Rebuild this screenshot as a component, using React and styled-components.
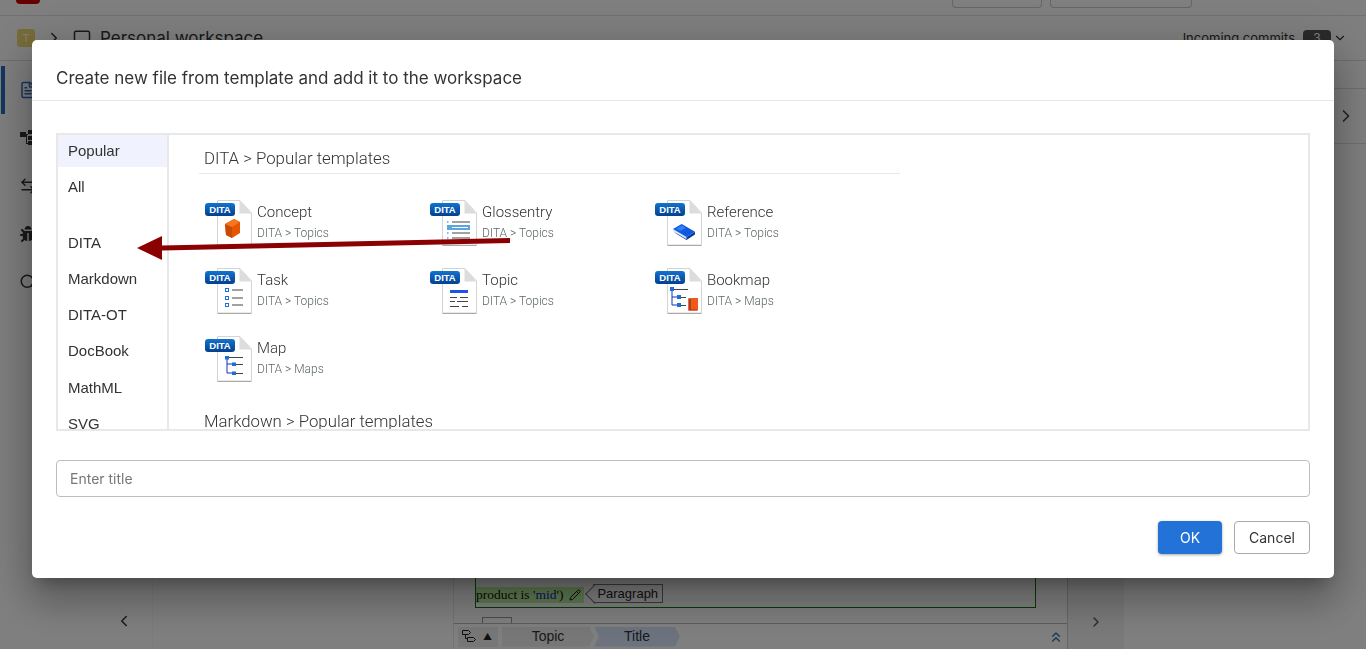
import styled, { createGlobalStyle } from "styled-components";
import { FileText, ArrowLeftRight, Search, ChevronRight, ChevronLeft, ChevronDown, ChevronsUp, Monitor, Pencil } from "lucide-react";
import { FaBug } from "react-icons/fa";

const GlobalStyle = createGlobalStyle`
  html, body { margin: 0; height: 100%; overflow: hidden; }
  body { font-family: Inter, "Liberation Sans", sans-serif; color: #333; background: #fff; }
  * { box-sizing: border-box; }
`;

/* ---------- page behind the dialog ---------- */
const Page = styled.div`
  height: 649px;
  display: flex;
  flex-direction: column;
  overflow: hidden;
`;
const TopBar = styled.div`
  height: 16px;
  flex: none;
  border-bottom: 1px solid #e2e2e2;
  display: flex;
  padding-left: 16px;
  overflow: hidden;
`;
const Logo = styled.div`
  width: 24px;
  height: 4px;
  background: #c00;
  border-radius: 0 0 4px 4px;
`;
const TopButtons = styled.div`
  margin-left: auto;
  margin-right: 174px;
  display: flex;
  gap: 8px;
`;
const TopButton = styled.div`
  width: ${(p) => p.$w}px;
  height: 8px;
  border: 1px solid #ccc;
  border-top: 0;
  border-radius: 0 0 4px 4px;
`;
const WorkspaceBar = styled.div`
  height: 45px;
  flex: none;
  border-bottom: 1px solid #ddd;
  display: flex;
  align-items: center;
  padding: 0 19px 0 17px;
  gap: 10px;
  font-size: 17px;
  svg { flex: none; }
  > span { margin-left: -1px; }
`;
const Avatar = styled.div`
  width: 18px;
  height: 18px;
  border-radius: 3px;
  background: #f0d870;
  color: #fff;
  font-size: 11px;
  display: flex;
  align-items: center;
  justify-content: center;
`;
const Commits = styled.div`
  margin-left: auto;
  display: flex;
  align-items: center;
  gap: 8px;
  font-size: 13px;
  svg { margin-left: -6px; }
`;
const CountBadge = styled.span`
  width: 28px;
  height: 16px;
  border-radius: 4px;
  background: #555;
  color: #fff;
  font-size: 12px;
  text-align: center;
`;
const Body = styled.div`
  flex: 1;
  display: flex;
  min-height: 0;
`;
const Rail = styled.div`
  width: 56px;
  padding-top: 5px;
  flex: none;
`;
const RailItem = styled.div`
  height: 48px;
  display: flex;
  align-items: center;
  justify-content: center;
  padding-right: 6px;
  color: ${(p) => (p.$active ? "#2a6cc4" : "#333")};
  border-left: 4px solid ${(p) => (p.$active ? "#2a6cc4" : "transparent")};
  margin-left: 1px;
`;
const LeftPanel = styled.div`
  width: 97px;
  flex: none;
  display: flex;
  align-items: flex-end;
  justify-content: flex-end;
  padding: 0 19px 19px 0;
  border-right: 1px solid #f7f7f7;
  color: #333;
`;
const Gutter = styled.div`
  width: 300px;
  flex: none;
`;
const Editor = styled.div`
  width: 615px;
  flex: none;
  display: flex;
  flex-direction: column;
  justify-content: flex-end;
  border-left: 1px solid #e8e8e8;
  border-right: 1px solid #ccc;
`;
const EditBox = styled.div`
  margin: 0 31px 0 21px;
  height: 33px;
  border: 1px solid #0a7a0a;
  border-top: 0;
  display: flex;
  align-items: flex-start;
  padding-top: 12px;
`;
const Marked = styled.span`
  font: 13.5px "Liberation Serif", serif;
  background: #bcf5a0;
  height: 16px;
  line-height: 16px;
  display: flex;
  align-items: center;
  gap: 6px;
  padding-right: 3px;
  color: #111;
  b { font-weight: 400; color: #22c; }
`;
const Tag = styled.span`
  position: relative;
  margin: -3px 0 0 9px;
  height: 19px;
  padding: 0 4px 0 4px;
  border: 1px solid #777;
  border-left: 0;
  font: 13px "Liberation Sans", sans-serif;
  line-height: 18px;
  color: #222;
  &::before {
    content: "";
    position: absolute;
    left: -5px;
    top: 2px;
    width: 13px;
    height: 13px;
    border-left: 1px solid #777;
    border-bottom: 1px solid #777;
    transform: rotate(45deg);
  }
`;
const Stub = styled.div`
  margin: 9px 0 0 28px;
  width: 30px;
  height: 6px;
  border: 1px solid #999;
  border-bottom: 0;
`;
const Crumbs = styled.div`
  height: 26px;
  border-top: 1px solid #bbb;
  display: flex;
  align-items: center;
  padding: 0 3px 0 4px;
  background: #fff;
`;
const CrumbTools = styled.div`
  width: 40px;
  height: 20px;
  background: #eee;
  margin-right: 4px;
  display: flex;
  align-items: center;
  justify-content: space-between;
  padding: 0 6px 0 4px;
  font-size: 9px;
  color: #222;
`;
const Crumb = styled.div`
  width: ${(p) => p.$w}px;
  height: 20px;
  background: ${(p) => (p.$on ? "#d8e6ff" : "#eeeeee")};
  clip-path: polygon(0 0, calc(100% - 5px) 0, 100% 50%, calc(100% - 5px) 100%, 0 100%${(p) => (p.$on ? ", 5px 50%" : "")});
  font: 14px "Liberation Sans", sans-serif;
  color: #333;
  text-align: center;
  line-height: 19px;
`;
const CrumbEnd = styled.div`
  margin-left: auto;
  display: flex;
  color: #2a70b0;
`;
const SideColumn = styled.div`
  width: 56px;
  flex: none;
  background: #f4f4f4;
  display: flex;
  align-items: flex-end;
  justify-content: center;
  padding-bottom: 19px;
  color: #555;
`;
const RightPanel = styled.div`
  flex: 1;
  display: flex;
  flex-direction: column;
`;
const RightHead = styled.div`
  margin-top: 27px;
  height: 56px;
  border-top: 1px solid #ddd;
  border-bottom: 1px solid #ddd;
  display: flex;
  align-items: center;
  justify-content: flex-end;
  padding-right: 10px;
  color: #444;
`;

/* ---------- dialog ---------- */
const Backdrop = styled.div`
  position: fixed;
  inset: 0;
  background: rgba(0, 0, 0, 0.5);
`;
const Dialog = styled.div`
  position: fixed;
  left: 32px;
  top: 40px;
  width: 1302px;
  height: 538px;
  background: #fff;
  border-radius: 5px;
  box-shadow: 0 11px 15px -7px rgba(0, 0, 0, 0.25), 0 24px 38px 3px rgba(0, 0, 0, 0.18), 0 9px 46px 8px rgba(0, 0, 0, 0.16);
  display: flex;
  flex-direction: column;
`;
const DialogTitle = styled.div`
  height: 61px;
  flex: none;
  padding: 16px 24px 0;
  display: flex;
  align-items: center;
  border-bottom: 1px solid #e6e6e6;
  font-size: 17px;
  color: #333;
`;
const DialogBody = styled.div`
  flex: 1;
  padding: 32px 24px 24px;
  display: flex;
  flex-direction: column;
`;
const Chooser = styled.div`
  height: 298px;
  flex: none;
  border: 2px solid #e8e8e8;
  display: flex;
  overflow: hidden;
`;
const Categories = styled.div`
  width: 111px;
  flex: none;
  border-right: 2px solid #e8e8e8;
  overflow: hidden;
`;
const Category = styled.div`
  height: 36.2px;
  padding-left: 10px;
  display: flex;
  align-items: center;
  font: 15px "Liberation Sans", sans-serif;
  color: #333;
  ${(p) => p.$on && "height: 32px; margin-bottom: 1px; padding-bottom: 2px; background: #f0f3fd;"}
  ${(p) => p.$gap && "margin-bottom: 20px;"}
`;
const Templates = styled.div`
  flex: 1;
  padding-left: 30px;
  overflow: hidden;
`;
const GroupTitle = styled.div`
  width: 701px;
  height: 39px;
  padding: 7px 0 0 5px;
  display: flex;
  align-items: center;
  border-bottom: 1px solid #e8e8e8;
  font: 300 16.8px Roboto, sans-serif;
  color: #333;
`;
const Grid = styled.div`
  display: grid;
  grid-template-columns: repeat(3, 225px);
  grid-auto-rows: 46px;
  row-gap: 22px;
  padding: 26px 0 0 6px;
  margin-bottom: 16px;
`;
const Item = styled.div`
  display: flex;
  gap: 4px;
`;
const Thumb = styled.div`
  position: relative;
  width: 48px;
  height: 46px;
  flex: none;
`;
const DitaBadge = styled.span`
  position: absolute;
  left: 0;
  top: 3px;
  width: 30px;
  height: 13px;
  border-radius: 3px;
  background: linear-gradient(#1273d0, #04408f);
  color: #fff;
  font: 700 9.5px/13px "Liberation Sans", sans-serif;
  text-align: center;
`;
const ItemText = styled.div`
  padding-top: 3px;
  font-family: Roboto, sans-serif;
`;
const ItemName = styled.div`
  font-size: 15px;
  font-weight: 300;
  line-height: 18px;
  color: #333;
`;
const ItemPath = styled.div`
  margin-top: 5px;
  font-size: 12px;
  font-weight: 300;
  line-height: 15px;
  color: #5c6668;
`;
const TitleInput = styled.input`
  margin-top: 29px;
  height: 37px;
  flex: none;
  width: 100%;
  padding: 0 13px;
  border: 1px solid #bdbdbd;
  border-radius: 4px;
  outline: none;
  font: 14px Inter, sans-serif;
  &::placeholder { color: #777; opacity: 1; }
`;
const Actions = styled.div`
  margin-top: 24px;
  display: flex;
  justify-content: flex-end;
  gap: 12px;
`;
const Button = styled.button`
  height: 33px;
  width: ${(p) => (p.$primary ? 64 : 76)}px;
  border-radius: 4px;
  border: ${(p) => (p.$primary ? "0" : "1px solid #aaa")};
  background: ${(p) => (p.$primary ? "#2272d8" : "#fff")};
  color: ${(p) => (p.$primary ? "#fff" : "#333")};
  box-shadow: ${(p) => (p.$primary ? "0 1px 3px rgba(0,0,0,.35)" : "none")};
  font: 14px Inter, sans-serif;
`;
const Arrow = styled.svg`
  position: fixed;
  left: 130px;
  top: 230px;
  width: 390px;
  height: 32px;
  pointer-events: none;
`;

/* ---------- template icon drawings ---------- */
const line = "#444";
const blue = "#1b6fd8";
const trunk = "#1133bb";
const drawings = {
  concept: (
    <>
      <path d="M20 24 L29 19 L35 22 L35 33 L27 38 L21 35 Z" fill="#e85500" />
      <path d="M20 24 L27 27 L27 38 L21 35 Z" fill="#c84a08" />
      <path d="M20 24 L29 19 L35 22 L27 27 Z" fill="#f5761f" />
    </>
  ),
  task: (
    <>
      {[22, 30, 37].map((y) => (
        <g key={y}>
          <rect x="20.5" y={y - 1.5} width="3" height="3" fill="#fff" stroke={blue} />
          <path d={`M27 ${y}H38`} stroke={line} />
        </g>
      ))}
    </>
  ),
  glossentry: (
    <>
      <rect x="17" y="25" width="23" height="5" fill="#5aa6e0" />
      <path d="M22 27.5H38" stroke="#fff" />
      {[22, 33, 38].map((y) => (
        <g key={y}>
          <path d={`M17 ${y}h1.5`} stroke={blue} />
          <path d={`M22 ${y}H40`} stroke={line} />
        </g>
      ))}
    </>
  ),
  topic: (
    <>
      <rect x="20" y="22" width="18" height="3" fill="#1a55e8" />
      <path d="M20 29.5h7M30 29.5h8" stroke={line} />
      <path d="M20 33.5h5M27 33.5h11" stroke={line} />
      <path d="M20 38.5h9M32 38.5h6" stroke={line} />
    </>
  ),
  reference: (
    <>
      <path d="M18.5 32 L31.5 40 L40 34.5 V31.7 L31.5 37 Z" fill="#0a3a98" />
      <path d="M18 29 L31.5 37 L31.5 39.3 L18.5 31.6 Z" fill="#d4e8f8" />
      <path d="M18 29 L26.7 24 L40 31.7 L31.5 37 Z" fill="#0f58e0" />
      <path d="M21 28.5 L27 25.5 L31 28 L25 31 Z" fill="#2f80f5" />
    </>
  ),
  bookmap: (
    <>
      <path d="M17 21V37H23M17 29H23" fill="none" stroke={trunk} />
      <path d="M19 21.5H33M26 29.5H31M26 37.5H31" stroke={line} />
      <rect x="15" y="19" width="4" height="4" fill={blue} />
      <rect x="22" y="27" width="4" height="4" fill={blue} />
      <rect x="22" y="35" width="4" height="4" fill={blue} />
      <rect x="33" y="30" width="10" height="13" fill="#b83a10" stroke="#fff" strokeWidth=".6" />
      <rect x="36" y="30" width="7" height="11.5" fill="#f0581c" />
    </>
  ),
  map: (
    <>
      <path d="M22 21V37H28M22 28H28" fill="none" stroke={trunk} />
      <path d="M24 21.5H38M31 28.5H38M31 37.5H38" stroke={line} />
      <rect x="20" y="20" width="4" height="3.5" fill={blue} />
      <rect x="27" y="26.5" width="4" height="3.5" fill={blue} />
      <rect x="27" y="35.5" width="4" height="3.5" fill={blue} />
    </>
  ),
};

const templates = [
  { name: "Concept", kind: "concept", path: "DITA > Topics" },
  { name: "Glossentry", kind: "glossentry", path: "DITA > Topics" },
  { name: "Reference", kind: "reference", path: "DITA > Topics" },
  { name: "Task", kind: "task", path: "DITA > Topics" },
  { name: "Topic", kind: "topic", path: "DITA > Topics" },
  { name: "Bookmap", kind: "bookmap", path: "DITA > Maps" },
  { name: "Map", kind: "map", path: "DITA > Maps" },
];

const categories = ["Popular", "All", "DITA", "Markdown", "DITA-OT", "DocBook", "MathML", "SVG"];

const TemplateIcon = ({ kind }) => (
  <Thumb>
    <svg width="48" height="46" viewBox="0 0 48 46">
      <path d="M12.5 .5H35L46.5 13V45H12.5Z" fill="#fff" stroke="#d4d4d4" />
      <path d="M46.5 45.5H12.5" stroke="#a8a8a8" />
      <path d="M34.5 .5V13.5H46.5Z" fill="#dcdcdc" />
      {drawings[kind]}
    </svg>
    <DitaBadge>DITA</DitaBadge>
  </Thumb>
);

const TreeIcon = () => (
  <svg width="16" height="16" viewBox="0 0 16 16" fill="currentColor">
    <rect x="0" y="2" width="6" height="5" />
    <rect x="8" y="0" width="5" height="4" />
    <rect x="8" y="6" width="5" height="4" />
    <rect x="8" y="11" width="5" height="4" />
    <path d="M6 4h2v1H7v8h1v1H6z" />
  </svg>
);

const ElementIcon = () => (
  <svg width="16" height="16" viewBox="0 0 16 16" fill="none" stroke="#222">
    <path d="M.5 1.5h6l2 2-2 2h-6zM5.5 8.5h6l2 2-2 2h-6zM3.5 5.5v4h2" />
  </svg>
);

const Background = () => (
  <Page>
    <TopBar>
      <Logo />
      <TopButtons>
        <TopButton $w={90} />
        <TopButton $w={142} />
      </TopButtons>
    </TopBar>
    <WorkspaceBar>
      <Avatar>T</Avatar>
      <ChevronRight size={18} />
      <Monitor size={18} />
      <span>Personal workspace</span>
      <Commits>
        Incoming commits <CountBadge>3</CountBadge> <ChevronDown size={14} />
      </Commits>
    </WorkspaceBar>
    <Body>
      <Rail>
        <RailItem $active><FileText size={18} /></RailItem>
        <RailItem><TreeIcon /></RailItem>
        <RailItem><ArrowLeftRight size={18} /></RailItem>
        <RailItem><FaBug size={16} /></RailItem>
        <RailItem><Search size={18} /></RailItem>
      </Rail>
      <LeftPanel><ChevronLeft size={18} /></LeftPanel>
      <Gutter />
      <Editor>
        <EditBox>
          <Marked>
            <span>product is '<b>mid</b>')</span>
            <Pencil size={12} />
          </Marked>
          <Tag>Paragraph</Tag>
        </EditBox>
        <Stub />
        <Crumbs>
          <CrumbTools><ElementIcon /><span>▲</span></CrumbTools>
          <Crumb $w={92}>Topic</Crumb>
          <Crumb $w={86} $on>Title</Crumb>
          <CrumbEnd><ChevronsUp size={16} /></CrumbEnd>
        </Crumbs>
      </Editor>
      <SideColumn><ChevronRight size={16} /></SideColumn>
      <RightPanel>
        <RightHead><ChevronRight size={20} /></RightHead>
      </RightPanel>
    </Body>
  </Page>
);

export default function App() {
  return (
    <>
      <GlobalStyle />
      <Background />
      <Backdrop />
      <Dialog>
        <DialogTitle>Create new file from template and add it to the workspace</DialogTitle>
        <DialogBody>
          <Chooser>
            <Categories>
              {categories.map((c, i) => (
                <Category key={c} $on={i === 0} $gap={i === 1}>{c}</Category>
              ))}
            </Categories>
            <Templates>
              <GroupTitle>DITA &gt; Popular templates</GroupTitle>
              <Grid>
                {templates.map((t) => (
                  <Item key={t.name}>
                    <TemplateIcon kind={t.kind} />
                    <ItemText>
                      <ItemName>{t.name}</ItemName>
                      <ItemPath>{t.path}</ItemPath>
                    </ItemText>
                  </Item>
                ))}
              </Grid>
              <GroupTitle>Markdown &gt; Popular templates</GroupTitle>
            </Templates>
          </Chooser>
          <TitleInput placeholder="Enter title" />
          <Actions>
            <Button $primary>OK</Button>
            <Button>Cancel</Button>
          </Actions>
        </DialogBody>
      </Dialog>
      <Arrow viewBox="0 0 390 32">
        <path d="M380 8 L32 15.5 L32 6 L7 18 L32 30 L32 20.5 L380 13 Z" fill="#8b0000" />
      </Arrow>
    </>
  );
}
